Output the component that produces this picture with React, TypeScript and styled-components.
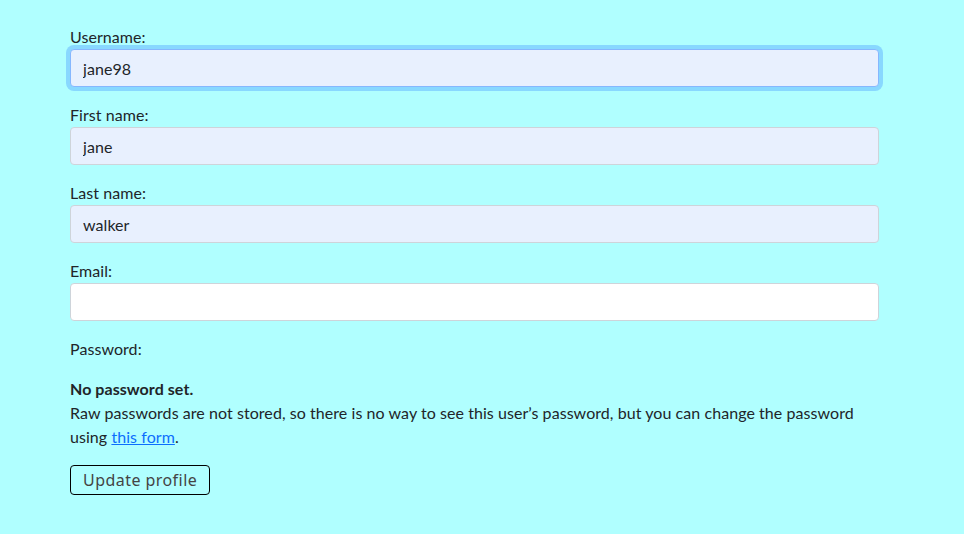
import React from "react";
import styled, { createGlobalStyle } from "styled-components";

const GlobalStyle = createGlobalStyle`
  body {
    margin: 0;
    background-color: #b0ffff;
    font-family: "Lato", "Liberation Sans", sans-serif;
    font-size: 16px;
    line-height: 24px;
    letter-spacing: 0.06px;
    color: #212529;
  }
`;

const Form = styled.form`
  width: 809px;
  margin-left: 70px;
  padding-top: 25px;
`;

const Group = styled.div`
  display: flex;
  flex-direction: column;
  margin-bottom: 16px;
`;

const Label = styled.label`
  display: block;
  line-height: 24px;
`;

const Input = styled.input<{ $filled?: boolean; $focused?: boolean }>`
  box-sizing: border-box;
  height: 38px;
  width: 100%;
  padding: 6px 12px;
  font-family: inherit;
  font-size: 16px;
  letter-spacing: inherit;
  color: #212529;
  background-color: ${(p) => (p.$filled ? "#e8f0fe" : "#ffffff")};
  border: 1px solid ${(p) => (p.$focused ? "#86b7fe" : "#ced4da")};
  border-radius: 4px;
  outline: none;
  box-shadow: ${(p) => (p.$focused ? "0 0 0 4px #88d8ff" : "none")};
`;

const Strong = styled.div`
  font-weight: 700;
  margin-top: 16px;
`;

const Help = styled.p`
  margin: 0 0 16px;
`;

const Link = styled.a`
  color: #0d6efd;
  text-decoration: underline;
`;

const Button = styled.button`
  box-sizing: border-box;
  height: 30px;
  padding: 0 12px;
  background: transparent;
  border: 1px solid #000;
  border-radius: 4px;
  font-family: "Noto Sans", "Liberation Sans", sans-serif;
  font-size: 16px;
  letter-spacing: 0.45px;
  color: #444;
`;

const fields = [
  { label: "Username:", value: "jane98", filled: true, focused: true },
  { label: "First name:", value: "jane", filled: true },
  { label: "Last name:", value: "walker", filled: true },
  { label: "Email:", value: "" },
];

export default function App() {
  return (
    <>
      <GlobalStyle />
      <Form onSubmit={(e) => e.preventDefault()}>
        {fields.map((f) => (
          <Group key={f.label}>
            <Label>{f.label}</Label>
            <Input
              defaultValue={f.value}
              $filled={f.filled}
              $focused={f.focused}
            />
          </Group>
        ))}
        <Label>Password:</Label>
        <Strong>No password set.</Strong>
        <Help>
          Raw passwords are not stored, so there is no way to see this user’s
          password, but you can change the password using{" "}
          <Link href="#">this form</Link>.
        </Help>
        <Button type="submit">Update profile</Button>
      </Form>
    </>
  );
}
